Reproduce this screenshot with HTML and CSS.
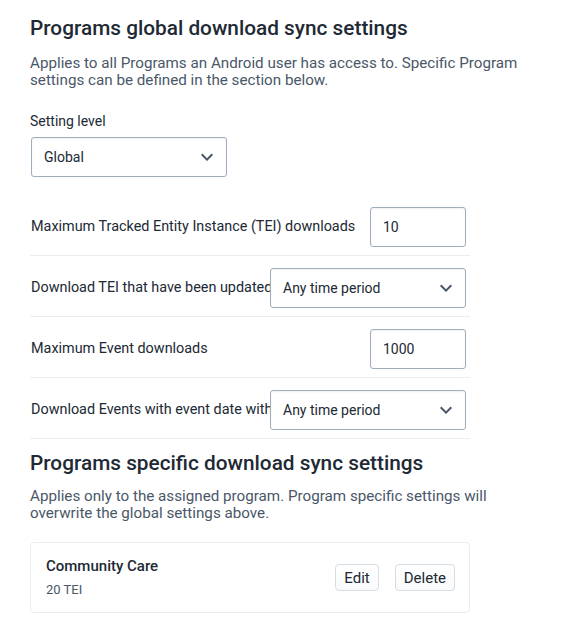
FILE: index.html
```html
<!DOCTYPE html>
<html>
<head>
<meta charset="utf-8">
<link rel="stylesheet" href="styles.css">
</head>
<body>
<main class="page">
  <h1 class="title">Programs global download sync settings</h1>
  <p class="desc">Applies to all Programs an Android user has access to. Specific Program settings can be defined in the section below.</p>

  <div class="field-label">Setting level</div>
  <div class="select select-level">
    <span class="select-value">Global</span>
    <svg class="chev" viewBox="0 0 24 24" width="24" height="24"><path d="M16.59 8.59L12 13.17 7.41 8.59 6 10l6 6 6-6z"/></svg>
  </div>

  <div class="rows">
    <div class="row">
      <div class="row-label">Maximum Tracked Entity Instance (TEI) downloads</div>
      <div class="input">10</div>
    </div>
    <div class="row">
      <div class="row-label">Download TEI that have been updated within</div>
      <div class="select">
        <span class="select-value">Any time period</span>
        <svg class="chev" viewBox="0 0 24 24" width="24" height="24"><path d="M16.59 8.59L12 13.17 7.41 8.59 6 10l6 6 6-6z"/></svg>
      </div>
    </div>
    <div class="row">
      <div class="row-label">Maximum Event downloads</div>
      <div class="input">1000</div>
    </div>
    <div class="row">
      <div class="row-label">Download Events with event date within</div>
      <div class="select">
        <span class="select-value">Any time period</span>
        <svg class="chev" viewBox="0 0 24 24" width="24" height="24"><path d="M16.59 8.59L12 13.17 7.41 8.59 6 10l6 6 6-6z"/></svg>
      </div>
    </div>
  </div>

  <h2 class="title title-2">Programs specific download sync settings</h2>
  <p class="desc desc-2">Applies only to the assigned program. Program specific settings will overwrite the global settings above.</p>

  <div class="card">
    <div class="card-info">
      <div class="card-title">Community Care</div>
      <div class="card-sub">20 TEI</div>
    </div>
    <div class="card-actions">
      <button class="btn">Edit</button>
      <button class="btn">Delete</button>
    </div>
  </div>
</main>
</body>
</html>
```

FILE: styles.css
```css
* { box-sizing: border-box; }
body {
  margin: 0;
  background: #fff;
  font-family: Roboto, "Liberation Sans", sans-serif;
  color: #212934;
}
.page {
  width: 470px;
  padding: 16px 0 0 30px;
}
.title {
  margin: 0;
  font-size: 20.8px;
  line-height: 24px;
  font-weight: 500;
  color: #212934;
  white-space: nowrap;
}
.title-2 { margin-top: 12px; }
.desc {
  margin: 15px 0 0;
  width: 500px;
  font-size: 15.2px;
  line-height: 17px;
  color: #4a5768;
}
.desc-2 { margin-top: 13px; }
.field-label {
  margin-top: 24px;
  font-size: 14px;
  line-height: 16px;
}
.select {
  position: relative;
  flex: none;
  width: 196px;
  height: 40px;
  border: 1px solid #a0adba;
  border-radius: 3px;
  background: #fff;
  display: flex;
  align-items: center;
  justify-content: space-between;
  padding: 0 7px 0 12px;
  font-size: 14px;
  box-shadow: inset 0 1px 2px rgba(48, 54, 60, 0.08);
}
.select-level { margin: 8px 0 0 1px; }
.chev { fill: #4a5768; }
.input {
  flex: none;
  width: 96px;
  height: 40px;
  border: 1px solid #a0adba;
  border-radius: 3px;
  display: flex;
  align-items: center;
  padding: 0 12px;
  font-size: 14px;
  box-shadow: inset 0 1px 2px rgba(48, 54, 60, 0.08);
}
.rows { margin-top: 18px; }
.row {
  display: flex;
  align-items: center;
  padding: 12px 4px 8px 1px;
  border-bottom: 1px solid #e8edf2;
}
.row-label {
  flex: 1;
  min-width: 0;
  overflow: hidden;
  white-space: nowrap;
  font-size: 14.4px;
  line-height: 18px;
}
.card {
  margin-top: 20px;
  border: 1px solid #e8edf2;
  border-radius: 4px;
  padding: 15px 14px 15px 15px;
  display: flex;
  align-items: center;
  justify-content: space-between;
}
.card-title {
  font-size: 15px;
  line-height: 16px;
  font-weight: 500;
}
.card-sub {
  margin-top: 8px;
  font-size: 13px;
  line-height: 15px;
  color: #4a5768;
}
.card-actions {
  display: flex;
  gap: 16px;
}
.btn {
  height: 27px;
  padding: 0 8px;
  border: 1px solid #d5dde5;
  border-radius: 4px;
  background: linear-gradient(180deg, #fff 0%, #f9fafb 100%);
  font-family: Roboto, "Liberation Sans", sans-serif;
  font-size: 15px;
  color: #212934;
}
```
